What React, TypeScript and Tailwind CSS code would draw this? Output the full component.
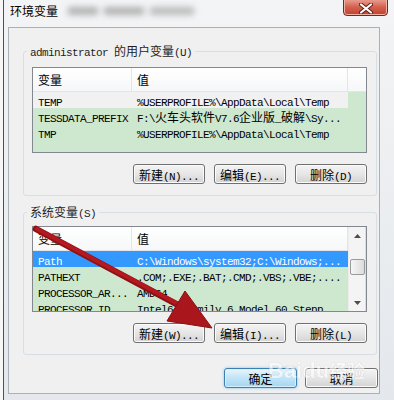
import React from "react";

const CJK = /[\u2e80-\u9fff\u3000-\u303f\uff00-\uffef]/;

// mixed text: CJK at 12px, latin as half-width mono (6px a char)
function T({ s }: { s: string }) {
  const runs: { c: boolean; t: string }[] = [];
  for (const ch of s) {
    const c = CJK.test(ch);
    const last = runs[runs.length - 1];
    if (last && last.c === c) last.t += ch;
    else runs.push({ c, t: ch });
  }
  return (
    <>
      {runs.map((r, i) =>
        r.c ? (
          <span key={i} className="font-['Noto_Sans_CJK_SC',sans-serif] text-[12px]">
            {r.t}
          </span>
        ) : (
          <span key={i} className="font-['Liberation_Mono',monospace] text-[11px] tracking-[-0.6px]">
            {r.t}
          </span>
        )
      )}
    </>
  );
}

type Row = { name: string; value: string; mark?: "sel" | "hi" };

const userVars: Row[] = [
  { name: "TEMP", value: "%USERPROFILE%\\AppData\\Local\\Temp", mark: "sel" },
  { name: "TESSDATA_PREFIX", value: "F:\\火车头软件V7.6企业版_破解\\Sy..." },
  { name: "TMP", value: "%USERPROFILE%\\AppData\\Local\\Temp" },
];

const sysVars: Row[] = [
  { name: "Path", value: "C:\\Windows\\system32;C:\\Windows;...", mark: "hi" },
  { name: "PATHEXT", value: ".COM;.EXE;.BAT;.CMD;.VBS;.VBE;...." },
  { name: "PROCESSOR_AR...", value: "AMD64" },
  { name: "PROCESSOR_ID", value: "Intel64 Family 6 Model 60 Stepp" },
];

function ScrollBar() {
  return (
    <div className="flex h-full w-[17px] flex-col items-center border-l border-[#ececec] bg-[#f4f4f4]">
      <div className="flex h-[17px] items-center justify-center">
        <svg width="7" height="4" viewBox="0 0 7 4">
          <path d="M0 4 L3.5 0 L7 4 Z" fill="#4d4d4d" />
        </svg>
      </div>
      <div className="mt-[15px] h-[16px] w-[15px] rounded-[2px] border border-[#9a9a9a] bg-gradient-to-r from-[#f6f6f6] to-[#dcdcdc]" />
      <div className="flex-1" />
      <div className="flex h-[17px] items-center justify-center">
        <svg width="7" height="4" viewBox="0 0 7 4">
          <path d="M0 0 L3.5 4 L7 0 Z" fill="#4d4d4d" />
        </svg>
      </div>
    </div>
  );
}

function List({ rows, scroll }: { rows: Row[]; scroll?: boolean }) {
  return (
    <div className="flex h-[86px] overflow-hidden border border-[#828790] bg-[#cde8cf] text-black">
      <div className="flex w-[315px] shrink-0 flex-col">
        <div className="flex h-[24px] shrink-0 border-b border-[#e5e5e5] bg-gradient-to-b from-white to-[#f6f7f8] leading-[23px]">
          <div className="w-[99px] border-r border-[#e5e5e5] pl-[5px]">
            <T s="变量" />
          </div>
          <div className="flex-1 border-r border-[#e5e5e5] pl-[5px]">
            <T s="值" />
          </div>
        </div>
        {rows.map((r) => (
          <div
            key={r.name}
            className={
              r.mark === "hi"
                ? "flex h-[16px] shrink-0 whitespace-nowrap bg-[#3399ff] leading-[16px] text-white"
                : r.mark === "sel"
                ? "flex h-[16px] shrink-0 whitespace-nowrap bg-[#f1f1f1] leading-[16px]"
                : "flex h-[16px] shrink-0 whitespace-nowrap leading-[16px]"
            }
          >
            <div className="w-[99px] shrink-0 overflow-hidden pl-[5px]">
              <T s={r.name} />
            </div>
            <div className="flex-1 overflow-hidden pl-[5px]">
              <T s={r.value} />
            </div>
          </div>
        ))}
      </div>
      {scroll ? (
        <ScrollBar />
      ) : (
        <div className="h-[24px] flex-1 border-b border-[#e5e5e5] bg-gradient-to-b from-white to-[#f6f7f8]" />
      )}
    </div>
  );
}

function Btn({ label, wide }: { label: string; wide?: boolean }) {
  return (
    <button
      className={
        wide
          ? "h-[20px] w-[73px] rounded-[3px] border border-[#707070] bg-gradient-to-b from-[#f4f4f4] via-[#e6e6e6] to-[#d3d3d3] leading-[18px] text-black shadow-[inset_0_0_0_1px_#fbfbfb]"
          : "h-[20px] w-[72px] rounded-[3px] border border-[#707070] bg-gradient-to-b from-[#f4f4f4] via-[#e6e6e6] to-[#d3d3d3] leading-[18px] text-black shadow-[inset_0_0_0_1px_#fbfbfb]"
      }
    >
      <T s={label} />
    </button>
  );
}

function Group({ title, children }: { title: string; children: React.ReactNode }) {
  return (
    <fieldset className="rounded-[3px] border border-[#d5dfe5] pb-[11px] pl-[8px] pr-[9px]">
      <legend className="ml-[-5px] px-[3px] leading-[14px] text-[#1e1e1e]">
        <T s={title} />
      </legend>
      {children}
    </fieldset>
  );
}

export default function App() {
  return (
    <div className="relative h-[400px] w-[394px] overflow-hidden bg-[#f7f7f7]">
      <div className="ml-[3px] flex h-full flex-col border-l border-[#4f4f4f] bg-gradient-to-b from-[#f3f4f5] to-[#e4e8ec]">
        {/* title bar */}
        <div className="flex h-[27px] shrink-0 items-start pl-[6px]">
          <span className="mt-[3px] font-['Noto_Sans_CJK_SC',sans-serif] text-[12px] leading-[16px] text-black">
            环境变量
          </span>
          <div className="ml-[10px] mt-[7px] flex gap-[6px] opacity-60 blur-[3px]">
            <div className="h-[8px] w-[30px] bg-[#858585]" />
            <div className="h-[8px] w-[40px] bg-[#858585]" />
            <div className="h-[8px] w-[44px] bg-[#959595]" />
          </div>
          <div className="ml-auto mr-[6px] mt-[-2px] flex h-[18px] w-[45px] items-center justify-center rounded-b-[4px] border border-[#6d2a22] bg-gradient-to-b from-[#eaa395] via-[#d4604f] to-[#c2402f] shadow-[inset_0_0_0_1px_#f0b3a6]">
            <svg width="14" height="11" viewBox="0 0 14 11" className="mt-[2px]">
              <path d="M2 1.5 L12 9.5 M12 1.5 L2 9.5" stroke="#5a1f18" strokeWidth="4" strokeLinecap="round" />
              <path d="M2 1.5 L12 9.5 M12 1.5 L2 9.5" stroke="#ffffff" strokeWidth="2.2" strokeLinecap="round" />
            </svg>
          </div>
        </div>

        {/* client area */}
        <div className="ml-[4px] flex h-[367px] w-[372px] shrink-0 flex-col border border-[#a9b0b8] bg-[#f0f0f0] pl-[14px] pr-[2px] pt-[15px]">
          <Group title="administrator 的用户变量(U)">
            <div className="mt-[7px]">
              <List rows={userVars} />
            </div>
            <div className="mt-[11px] flex justify-end gap-[9px]">
              <Btn label="新建(N)..." />
              <Btn label="编辑(E)..." />
              <Btn label="删除(D)" />
            </div>
          </Group>

          <div className="mt-[8px]">
            <Group title="系统变量(S)">
              <div className="mt-[5px]">
                <List rows={sysVars} scroll />
              </div>
              <div className="mt-[11px] flex justify-end gap-[9px]">
                <Btn label="新建(W)..." />
                <Btn label="编辑(I)..." />
                <Btn label="删除(L)" />
              </div>
            </Group>
          </div>

          <div className="mr-[-1px] mt-[13px] flex justify-end gap-[8px]">
            <button className="h-[20px] w-[73px] rounded-[3px] border border-[#3c7fb1] bg-gradient-to-b from-[#e9f5fc] via-[#c1e4f8] to-[#a4d6f2] leading-[18px] text-black shadow-[0_0_3px_#7ec4ee,inset_0_0_0_1px_#d8f0fd]">
              <T s="确定" />
            </button>
            <Btn label="取消" wide />
          </div>
        </div>
      </div>

      {/* baidu watermark */}
      <div className="pointer-events-none absolute left-[268px] top-[358px] font-['Liberation_Sans',sans-serif] text-[22px] font-bold leading-[24px] text-white opacity-60 [text-shadow:0_0_1px_#a0a0a0]">
        Baidu<span className="font-['Noto_Sans_CJK_SC',sans-serif] text-[18px]">经验</span>
      </div>

      {/* red annotation arrow */}
      <svg className="pointer-events-none absolute left-0 top-0" width="394" height="400" viewBox="0 0 394 400">
        <line x1="36" y1="229" x2="180" y2="306" stroke="#8e1115" strokeWidth="6.5" strokeLinecap="round" />
        <line x1="37" y1="229" x2="180" y2="305" stroke="#b3191e" strokeWidth="4" strokeLinecap="round" />
        <path d="M212 328 L167 321 L185 291 Z" fill="#a9161b" stroke="#8a1014" strokeWidth="1" strokeLinejoin="round" />
      </svg>
    </div>
  );
}
